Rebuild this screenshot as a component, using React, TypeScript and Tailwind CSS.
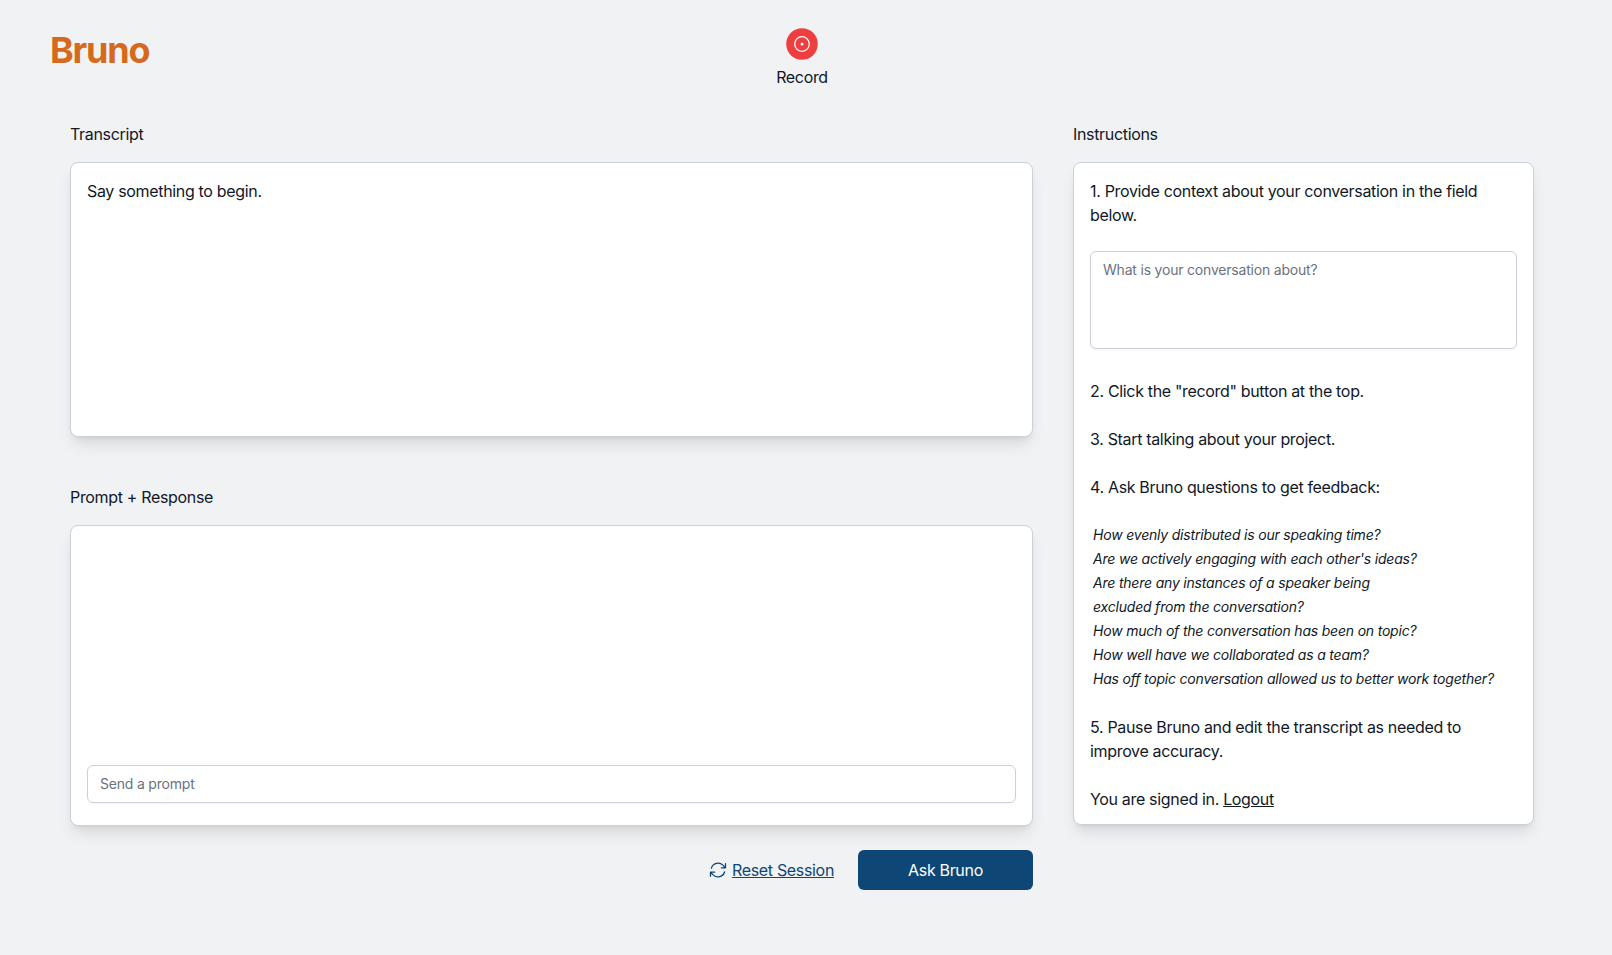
import React from "react";

const questions = [
  "How evenly distributed is our speaking time?",
  "Are we actively engaging with each other's ideas?",
  "Are there any instances of a speaker being",
  "excluded from the conversation?",
  "How much of the conversation has been on topic?",
  "How well have we collaborated as a team?",
  "Has off topic conversation allowed us to better work together?",
];

const card = "rounded-lg border border-[#ccd0d8] bg-white shadow-lg";

function RecordButton() {
  return (
    <button className="flex flex-col items-center gap-[5px]">
      <svg className="h-8 w-8" viewBox="0 0 32 32" fill="none">
        <circle cx="16" cy="16" r="15.75" fill="#ed3f3f" />
        <circle cx="16" cy="16" r="7.3" stroke="#fff" strokeWidth="1.25" />
        <circle cx="16" cy="16" r="1.5" fill="#fff" />
      </svg>
      <span className="text-base">Record</span>
    </button>
  );
}

function ResetIcon() {
  return (
    <svg
      className="h-5 w-5"
      viewBox="0 0 24 24"
      fill="none"
      stroke="currentColor"
      strokeWidth="1.5"
      strokeLinecap="round"
      strokeLinejoin="round"
    >
      <path d="M16.023 9.348h4.992v-.001M2.985 19.644v-4.992m0 0h4.992m-4.993 0l3.181 3.183a8.25 8.25 0 0013.803-3.7M4.031 9.865a8.25 8.25 0 0113.803-3.7l3.181 3.182m0-4.992v4.99" />
    </svg>
  );
}

export default function App() {
  return (
    <div className="flex h-[955px] flex-col bg-[#f0f2f4] font-['Inter',sans-serif] text-base tracking-[-0.33px] text-[#111827]">
      <header className="grid h-[122px] grid-cols-3 items-start px-[50px] pt-7">
        <h1 className="pt-0.5 text-4xl font-bold tracking-[-1.2px] text-[#d66a1c]">Bruno</h1>
        <div className="-ml-2 flex justify-center">
          <RecordButton />
        </div>
      </header>

      <main className="flex gap-10 pl-[70px] pr-[78px]">
        <div className="flex w-[963px] flex-col">
          <h2>Transcript</h2>
          <section className={`${card} mt-4 h-[275px] p-4`}>Say something to begin.</section>

          <h2 className="mt-12">Prompt + Response</h2>
          <section className={`${card} mt-4 flex h-[301px] flex-col justify-end px-4 pb-[22px]`}>
            <input
              className="h-[38px] w-full rounded-md border border-[#ccd0d8] px-3 pb-0.5 text-sm tracking-[-0.2px] shadow-xs placeholder:text-[#6b7280]"
              placeholder="Send a prompt"
            />
          </section>

          <div className="mt-6 flex items-center justify-end gap-6">
            <button className="flex items-center gap-1 text-[#0e4676]">
              <ResetIcon />
              <span className="underline">Reset Session</span>
            </button>
            <button className="h-10 w-[175px] rounded-md bg-[#0e4676] text-white">Ask Bruno</button>
          </div>
        </div>

        <div className="flex w-[461px] flex-col">
          <h2>Instructions</h2>
          <section className={`${card} mt-4 h-[663px] px-4 pt-4`}>
            <p>
              1. Provide context about your conversation in the field
              <br />
              below.
            </p>
            <textarea
              className="mt-6 block h-[98px] w-full resize-none rounded-md border border-[#ccd0d8] px-3 py-2 text-sm tracking-[-0.2px] shadow-xs placeholder:text-[#6b7280]"
              placeholder="What is your conversation about?"
            />
            <p className="mt-[30px]">2. Click the "record" button at the top.</p>
            <p className="mt-6">3. Start talking about your project.</p>
            <p className="mt-6">4. Ask Bruno questions to get feedback:</p>
            <ul className="mt-6 pl-[3px] text-sm leading-6 italic tracking-[-0.2px]">
              {questions.map((q) => (
                <li key={q} className="whitespace-nowrap">{q}</li>
              ))}
            </ul>
            <p className="mt-6">
              5. Pause Bruno and edit the transcript as needed to
              <br />
              improve accuracy.
            </p>
            <p className="mt-6">
              You are signed in. <a className="underline">Logout</a>
            </p>
          </section>
        </div>
      </main>
    </div>
  );
}
